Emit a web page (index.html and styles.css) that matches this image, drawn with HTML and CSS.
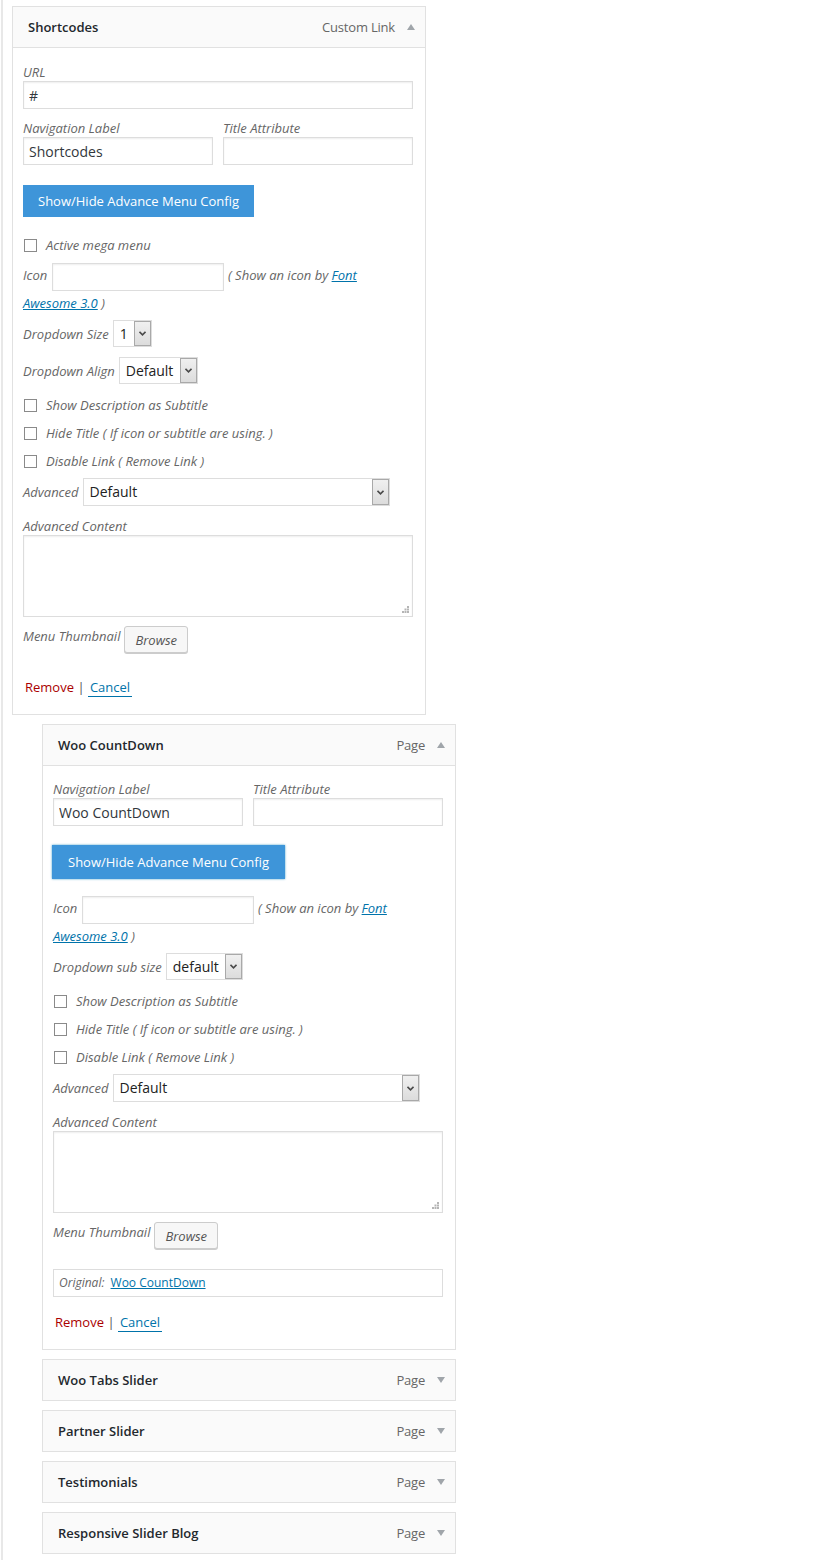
FILE: index.html
```html
<!DOCTYPE html>
<html lang="en">

<head>
	<meta charset="UTF-8">
	<title>Menu items</title>
	<link rel="stylesheet" href="styles.css">
</head>

<body>
<div class="page">

	<!-- item: Shortcodes (open) -->
	<div class="item open">
		<div class="item-bar">
			<span class="item-title">Shortcodes</span>
			<span class="item-type">Custom Link</span>
			<svg class="toggle" width="8" height="6" viewBox="0 0 8 6"><polygon points="0,6 4,0 8,6"/></svg>
		</div>
		<div class="item-body">
			<div class="field">
				<label>URL</label>
				<input class="text" type="text" value="#">
			</div>
			<div class="field-pair">
				<div class="field">
					<label>Navigation Label</label>
					<input class="text big" type="text" value="Shortcodes">
				</div>
				<div class="field">
					<label>Title Attribute</label>
					<input class="text" type="text" value="">
				</div>
			</div>
			<div class="toggle-row">
				<button class="toggle-btn">Show/Hide Advance Menu Config</button>
			</div>
			<div class="check-row first">
				<input type="checkbox">
				<span>Active mega menu</span>
			</div>
			<p class="icon-row">
				<span class="lbl">Icon</span>
				<input class="text icon-input" type="text" value="">
				<span class="hint">( Show an icon by <a href="#">Font Awesome 3.0</a> )</span>
			</p>
			<div class="select-row">
				<span class="lbl">Dropdown Size</span>
				<div class="select" style="width: 39px;">
					<span class="select-val">1</span>
					<span class="select-arrow"><svg width="7" height="5" viewBox="0 0 7 5"><polyline points="0.5,0.8 3.5,3.8 6.5,0.8"/></svg></span>
				</div>
			</div>
			<div class="select-row">
				<span class="lbl">Dropdown Align</span>
				<div class="select" style="width: 79px;">
					<span class="select-val">Default</span>
					<span class="select-arrow"><svg width="7" height="5" viewBox="0 0 7 5"><polyline points="0.5,0.8 3.5,3.8 6.5,0.8"/></svg></span>
				</div>
			</div>
			<div class="check-row after-select">
				<input type="checkbox">
				<span>Show Description as Subtitle</span>
			</div>
			<div class="check-row">
				<input type="checkbox">
				<span>Hide Title ( If icon or subtitle are using. )</span>
			</div>
			<div class="check-row">
				<input type="checkbox">
				<span>Disable Link ( Remove Link )</span>
			</div>
			<div class="select-row advanced">
				<span class="lbl">Advanced</span>
				<div class="select tall" style="width: 307px;">
					<span class="select-val">Default</span>
					<span class="select-arrow"><svg width="7" height="5" viewBox="0 0 7 5"><polyline points="0.5,0.8 3.5,3.8 6.5,0.8"/></svg></span>
				</div>
			</div>
			<div class="field content-field">
				<label>Advanced Content</label>
				<div class="area-wrap">
					<textarea></textarea>
					<svg class="grip" width="7" height="7" viewBox="0 0 7 7"><rect x="5" y="0" width="2" height="2"/><rect x="2.5" y="2.5" width="2" height="2"/><rect x="5" y="2.5" width="2" height="2"/><rect x="0" y="5" width="2" height="2"/><rect x="2.5" y="5" width="2" height="2"/><rect x="5" y="5" width="2" height="2"/></svg>
				</div>
			</div>
			<div class="thumb-row">
				<span class="lbl">Menu Thumbnail</span>
				<button class="browse">Browse</button>
			</div>
			<div class="actions first-actions">
				<a class="remove" href="#">Remove</a>
				<span class="sep">|</span>
				<a class="cancel" href="#">Cancel</a>
			</div>
		</div>
	</div>

	<!-- item: Woo CountDown (open, sub item) -->
	<div class="item open sub">
		<div class="item-bar">
			<span class="item-title">Woo CountDown</span>
			<span class="item-type">Page</span>
			<svg class="toggle" width="8" height="6" viewBox="0 0 8 6"><polygon points="0,6 4,0 8,6"/></svg>
		</div>
		<div class="item-body second">
			<div class="field-pair">
				<div class="field">
					<label>Navigation Label</label>
					<input class="text big" type="text" value="Woo CountDown">
				</div>
				<div class="field">
					<label>Title Attribute</label>
					<input class="text" type="text" value="">
				</div>
			</div>
			<div class="toggle-row">
				<button class="toggle-btn focus">Show/Hide Advance Menu Config</button>
			</div>
			<p class="icon-row first">
				<span class="lbl">Icon</span>
				<input class="text icon-input" type="text" value="">
				<span class="hint">( Show an icon by <a href="#">Font Awesome 3.0</a> )</span>
			</p>
			<div class="select-row">
				<span class="lbl">Dropdown sub size</span>
				<div class="select" style="width: 77px;">
					<span class="select-val">default</span>
					<span class="select-arrow"><svg width="7" height="5" viewBox="0 0 7 5"><polyline points="0.5,0.8 3.5,3.8 6.5,0.8"/></svg></span>
				</div>
			</div>
			<div class="check-row after-select">
				<input type="checkbox">
				<span>Show Description as Subtitle</span>
			</div>
			<div class="check-row">
				<input type="checkbox">
				<span>Hide Title ( If icon or subtitle are using. )</span>
			</div>
			<div class="check-row">
				<input type="checkbox">
				<span>Disable Link ( Remove Link )</span>
			</div>
			<div class="select-row advanced">
				<span class="lbl">Advanced</span>
				<div class="select tall" style="width: 307px;">
					<span class="select-val">Default</span>
					<span class="select-arrow"><svg width="7" height="5" viewBox="0 0 7 5"><polyline points="0.5,0.8 3.5,3.8 6.5,0.8"/></svg></span>
				</div>
			</div>
			<div class="field content-field">
				<label>Advanced Content</label>
				<div class="area-wrap">
					<textarea></textarea>
					<svg class="grip" width="7" height="7" viewBox="0 0 7 7"><rect x="5" y="0" width="2" height="2"/><rect x="2.5" y="2.5" width="2" height="2"/><rect x="5" y="2.5" width="2" height="2"/><rect x="0" y="5" width="2" height="2"/><rect x="2.5" y="5" width="2" height="2"/><rect x="5" y="5" width="2" height="2"/></svg>
				</div>
			</div>
			<div class="thumb-row">
				<span class="lbl">Menu Thumbnail</span>
				<button class="browse">Browse</button>
			</div>
			<div class="original">
				<span>Original:</span>
				<a href="#">Woo CountDown</a>
			</div>
			<div class="actions">
				<a class="remove" href="#">Remove</a>
				<span class="sep">|</span>
				<a class="cancel" href="#">Cancel</a>
			</div>
		</div>
	</div>

	<!-- closed items -->
	<div class="item sub">
		<div class="item-bar">
			<span class="item-title">Woo Tabs Slider</span>
			<span class="item-type">Page</span>
			<svg class="toggle" width="8" height="6" viewBox="0 0 8 6"><polygon points="0,0 8,0 4,6"/></svg>
		</div>
	</div>
	<div class="item sub">
		<div class="item-bar">
			<span class="item-title">Partner Slider</span>
			<span class="item-type">Page</span>
			<svg class="toggle" width="8" height="6" viewBox="0 0 8 6"><polygon points="0,0 8,0 4,6"/></svg>
		</div>
	</div>
	<div class="item sub">
		<div class="item-bar">
			<span class="item-title">Testimonials</span>
			<span class="item-type">Page</span>
			<svg class="toggle" width="8" height="6" viewBox="0 0 8 6"><polygon points="0,0 8,0 4,6"/></svg>
		</div>
	</div>
	<div class="item sub">
		<div class="item-bar">
			<span class="item-title">Responsive Slider Blog</span>
			<span class="item-type">Page</span>
			<svg class="toggle" width="8" height="6" viewBox="0 0 8 6"><polygon points="0,0 8,0 4,6"/></svg>
		</div>
	</div>

</div>
</body>

</html>
```

FILE: styles.css
```css
* {
	padding: 0;
	margin: 0;
	box-sizing: border-box;
}

body {
	background: #fff;
	font-family: "Open Sans", "Liberation Sans", sans-serif;
	font-size: 13px;
	line-height: 18px;
	color: #444;
}

.page {
	margin-left: 1px;
	border-left: 2px solid #e8e8e8;
	min-height: 1560px;
	padding: 6px 0 0 9px;
}

/* menu item */
.item {
	width: 414px;
	margin-bottom: 9px;
}

.item.sub {
	margin-left: 30px;
}

.item-bar {
	display: flex;
	align-items: center;
	height: 42px;
	padding: 0 10px 0 15px;
	background: #fafafa;
	border: 1px solid #e1e1e1;
}

.item-title {
	flex: 1;
	font-weight: 600;
	color: #23282d;
}

.item-type {
	color: #666;
	letter-spacing: -0.2px;
}

.toggle {
	margin-left: 12px;
	fill: #a0a5aa;
}

.item-body {
	padding: 15px 12px 18px 10px;
	border: 1px solid #e1e1e1;
	border-top: 0;
	background: #fff;
}

.item-body.second {
	padding-top: 14px;
}

/* form bits */
label,
.lbl,
.check-row span,
.hint {
	font-style: italic;
	color: #666;
}

.field label {
	display: block;
}

.field + .field-pair,
.field + .field {
	margin-top: 10px;
}

.field-pair .field {
	margin-top: 0;
}

.text {
	display: block;
	width: 390px;
	height: 28px;
	padding: 0 5px;
	border: 1px solid #ddd;
	box-shadow: inset 0 1px 2px rgba(0, 0, 0, 0.07);
	font-family: "Open Sans", "Liberation Sans", sans-serif;
	font-size: 14px;
	color: #32373c;
	outline: none;
}

.field-pair {
	display: flex;
	gap: 10px;
}

.field-pair .text {
	width: 190px;
}

.toggle-row {
	margin-top: 20px;
}

.toggle-btn {
	height: 32px;
	padding: 0 15px;
	border: 0;
	background: #3e95d9;
	color: #fff;
	font-family: "Open Sans", "Liberation Sans", sans-serif;
	font-size: 13px;
}

.toggle-btn.focus {
	margin-left: -1px;
	height: 34px;
	margin-top: -1px;
	padding: 0 16px;
	box-shadow: 0 0 2px rgba(30, 140, 190, 0.8);
}

.check-row {
	display: flex;
	align-items: center;
	gap: 9px;
	height: 18px;
	margin-top: 10px;
}

.check-row.first {
	margin-top: 19px;
}

.check-row.after-select {
	margin-top: 12px;
}

.check-row input {
	appearance: none;
	width: 13px;
	height: 13px;
	margin-left: 1px;
	border: 1px solid #8a8a8a;
	background: #fff;
}

.icon-row {
	margin-top: 9px;
	line-height: 24px;
}

.icon-row.first {
	margin-top: 17px;
}

.icon-input {
	display: inline-block;
	width: 172px;
	vertical-align: middle;
	margin: 0 1px 0 1px;
}

a {
	color: #0073aa;
}

.select-row {
	display: flex;
	align-items: center;
	gap: 4px;
	margin-top: 10px;
}

.icon-row + .select-row {
	margin-top: 5px;
}

.select-row.advanced {
	margin-top: 8px;
}

.select {
	display: flex;
	height: 27px;
	border: 1px solid #ddd;
	background: #fff;
}

.select.tall {
	height: 28px;
}

.select-val {
	flex: 1;
	padding-left: 6px;
	font-size: 14px;
	line-height: 25px;
	color: #222;
	font-style: normal;
}

.select-arrow {
	display: flex;
	align-items: center;
	justify-content: center;
	width: 17px;
	border: 1px solid #a9a9a9;
	background: linear-gradient(#f0f0f0, #dcdcdc);
}

.select-arrow svg {
	fill: none;
	stroke: #4a4a4a;
	stroke-width: 1.6;
}

.content-field {
	margin-top: 11px;
}

.area-wrap {
	position: relative;
	width: 390px;
}

textarea {
	display: block;
	width: 390px;
	height: 82px;
	border: 1px solid #ddd;
	box-shadow: inset 0 1px 2px rgba(0, 0, 0, 0.07);
	resize: none;
	outline: none;
}

.grip {
	position: absolute;
	right: 4px;
	bottom: 4px;
	fill: #b5b5b5;
}

.thumb-row {
	display: flex;
	align-items: flex-start;
	gap: 4px;
	margin-top: 9px;
}

.thumb-row .lbl {
	margin-top: 1px;
}

.browse {
	height: 27px;
	padding: 0 10px;
	border: 1px solid #ccc;
	border-radius: 3px;
	background: #f7f7f7;
	box-shadow: 0 1px 0 #ccc;
	font-family: "Open Sans", "Liberation Sans", sans-serif;
	font-size: 13px;
	font-style: italic;
	color: #555;
}

.original {
	margin-top: 20px;
	width: 390px;
	height: 28px;
	padding: 0 5px;
	border: 1px solid #ddd;
	font-size: 12px;
	line-height: 26px;
}

.original span {
	font-style: italic;
	color: #666;
	margin-right: 3px;
}

.actions {
	margin-top: 16px;
}

.actions.first-actions {
	margin-top: 25px;
}

.actions a {
	text-decoration: none;
}

.remove {
	color: #a00;
	padding-left: 2px;
}

.cancel {
	padding: 0 2px;
	border-bottom: 1px solid #0073aa;
}

.sep {
	color: #555;
}
```
